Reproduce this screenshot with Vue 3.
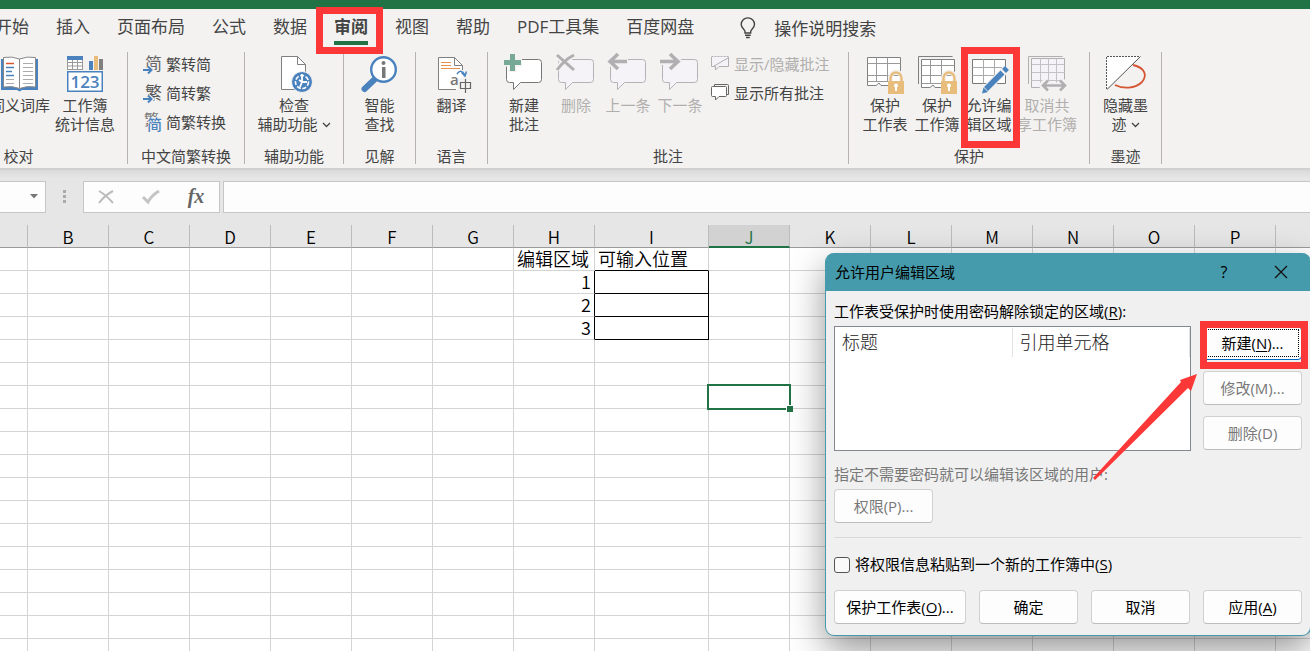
<script setup>
import { ref } from 'vue'

const tabs = ['开始', '插入', '页面布局', '公式', '数据', '审阅', '视图', '帮助', 'PDF工具集', '百度网盘']
const activeTab = ref('审阅')

const columns = ['A', 'B', 'C', 'D', 'E', 'F', 'G', 'H', 'I', 'J', 'K', 'L', 'M', 'N', 'O', 'P', 'Q']
const rowCount = 18
const cells = { H1: '编辑区域', I1: '可输入位置', H2: '1', H3: '2', H4: '3' }
const selected = 'J7'

function cellClass(col, row) {
  const boxed = row >= 2 && row <= 4
  return {
    number: col === 'H' && row > 1,
    'line-right': boxed && (col === 'H' || col === 'I'),
    'line-bottom': col === 'I' && row >= 1 && row <= 4,
  }
}

const pasteInfo = ref(false)
</script>

<template>
  <div class="app">
    <div class="titlebar"></div>

    <nav class="tabs" aria-label="功能区">
      <button
        v-for="tab in tabs"
        :key="tab"
        class="tab"
        :class="{ active: tab === activeTab }"
        @click="activeTab = tab"
      >
        {{ tab }}
        <span v-if="tab === '审阅'" class="mark mark-tab"></span>
      </button>
      <button class="tell-me">
        <svg width="18" height="22" viewBox="0 0 18 22" fill="none" stroke="#444" stroke-width="1.4">
          <path d="M6 16V14.5C6 12.500 2.200 11 2.200 7.500A6.600 6.600 0 0 1 15.500 7.500C15.500 11 11.700 12.500 11.700 14.500V16ZM6 18.300H11.700M7 20.500H10.700" />
        </svg>
        <span>操作说明搜索</span>
      </button>
    </nav>

    <section class="ribbon">
      <div class="group g-proof">
        <div class="items">
          <button class="big w60">
            <svg width="38" height="40" viewBox="0 0 38 40">
              <path d="M0 5H37V36H21L18.500 37.500L16 36H0Z" fill="#4a82bd" />
              <path d="M2.500 3.500Q11 2 18.500 5Q26 2 34.500 3.500V33Q26 31.500 18.500 34.500Q11 31.500 2.500 33Z" fill="#fff" stroke="#888" />
              <path d="M18.500 5V34" stroke="#888" />
              <path d="M5 9.500H13" stroke="#d65532" stroke-width="1.500" />
              <path d="M5 13.500H13M5 17.500H11M5 21.500H13" stroke="#4a82bd" stroke-width="1.300" />
              <path d="M5 25.500H13M5 29.500H13M22 9.500H32M22 13.500H32M22 17.500H32M22 21.500H32M22 25.500H32M22 29.500H32" stroke="#aaa" />
            </svg>
            <span>同义词库</span>
          </button>
          <button class="big w60">
            <svg width="36" height="40" viewBox="0 0 36 40">
              <rect x=".5" y="2.500" width="15" height="13" fill="#fff" stroke="#999" />
              <path d="M.5 8.500H15.500M.5 12H15.500M5.500 6V15.500M10.500 6V15.500" stroke="#999" />
              <rect y="2" width="16" height="4" fill="#4a82bd" />
              <rect x="22" y="7" width="4" height="9" fill="#4a82bd" />
              <rect x="27" y="2" width="4" height="14" fill="#e8bd7b" />
              <rect x="32" y="5" width="4" height="11" fill="#808080" />
              <rect x=".75" y="17.750" width="34.500" height="19.500" fill="#fff" stroke="#4a82bd" stroke-width="1.500" />
              <text x="18" y="34" text-anchor="middle" font-size="17" font-weight="600" fill="#4a82bd">123</text>
            </svg>
            <span>工作簿<br />统计信息</span>
          </button>
        </div>
        <div class="caption">校对</div>
      </div>

      <div class="group g-convert">
        <div class="items list">
          <button class="small">
            <svg width="20" height="20" viewBox="0 0 20 20">
              <text x="2" y="16" font-size="17" fill="#666">简</text>
              <path d="M0 16H9M5 12.500L9 16L5 19.500" fill="none" stroke="#f3f2f1" stroke-width="4" />
              <path d="M0 16H8.500M5 12.500L8.500 16L5 19.500" fill="none" stroke="#4a82bd" stroke-width="2" />
            </svg>
            <span>繁转简</span>
          </button>
          <button class="small">
            <svg width="20" height="20" viewBox="0 0 20 20">
              <text x="2" y="16" font-size="17" fill="#555">繁</text>
              <path d="M0 16H9M5 12.500L9 16L5 19.500" fill="none" stroke="#f3f2f1" stroke-width="4" />
              <path d="M0 16H8.500M5 12.500L8.500 16L5 19.500" fill="none" stroke="#4a82bd" stroke-width="2" />
            </svg>
            <span>简转繁</span>
          </button>
          <button class="small">
            <svg width="20" height="20" viewBox="0 0 20 20">
              <text x="1" y="13" font-size="15" fill="#777">繁</text>
              <rect x="5" y="5" width="14" height="15" fill="#f3f2f1" />
              <text x="4" y="18" font-size="15" font-weight="500" fill="#4a82bd">简</text>
            </svg>
            <span>简繁转换</span>
          </button>
        </div>
        <div class="caption">中文简繁转换</div>
      </div>

      <div class="group g-access">
        <div class="items center">
          <button class="big">
            <svg width="38" height="40" viewBox="-6 0 38 40">
              <path d="M.5 2.500H16.500L24.500 10.500V35.500H.5Z" fill="#fff" stroke="#808080" />
              <path d="M16.500 2.500V10.500H24.500" fill="none" stroke="#808080" />
              <circle cx="21" cy="28" r="10.500" fill="#4a82bd" stroke="#f3f2f1" />
              <circle cx="21" cy="28" r="6.500" fill="none" stroke="#fff" stroke-width="1.600" stroke-dasharray="4 1.600" />
              <path d="M21 20V28L26 28M21 28L18 26M21 28L19 33" fill="none" stroke="#fff" stroke-width="1.800" />
            </svg>
            <span>检查<br />辅助功能<svg class="caret" width="13" height="8" viewBox="0 0 13 8"><path d="M5 2L8.500 5.500L12 2" fill="none" stroke="#444" stroke-width="1.300" /></svg></span>
          </button>
        </div>
        <div class="caption">辅助功能</div>
      </div>

      <div class="group g-insight">
        <div class="items center">
          <button class="big">
            <svg width="37" height="40" viewBox="0 0 37 40">
              <path d="M3.500 35L14 25" stroke="#4a82bd" stroke-width="6" stroke-linecap="round" />
              <circle cx="22.500" cy="15.500" r="12.300" fill="#fff" stroke="#4a82bd" stroke-width="2.400" />
              <circle cx="22.500" cy="9" r="2" fill="#777" />
              <rect x="21" y="13" width="3.500" height="11" fill="#777" />
            </svg>
            <span>智能<br />查找</span>
          </button>
        </div>
        <div class="caption">见解</div>
      </div>

      <div class="group g-language">
        <div class="items center">
          <button class="big">
            <svg width="40" height="40" viewBox="-6 0 40 40">
              <path d="M.5 3.500H16.500L24.500 11.500V35.500H.5Z" fill="#fff" />
              <path d="M18 35.500H.5V3.500H16.500L24.500 11.500V16M16.500 3.500V11.500H24.500" fill="none" stroke="#808080" />
              <path d="M3 8.500H13M3 11.500H13M3 14.500H22" stroke="#e8914a" />
              <path d="M19 20Q23 14 27 21M23.500 18.500L27 22L28.500 17.500" fill="none" stroke="#4a82bd" stroke-width="1.500" />
              <rect x="20" y="24" width="15" height="14" fill="#f3f2f1" />
              <text x="12" y="31" font-size="15" font-weight="600" fill="#777">a</text>
              <path d="M22.500 28.500H32.500V34.500H22.500ZM27.500 25V39" fill="none" stroke="#666" stroke-width="1.200" />
            </svg>
            <span>翻译</span>
          </button>
        </div>
        <div class="caption">语言</div>
      </div>

      <div class="group g-comment">
        <div class="items">
          <button class="big w52">
            <svg width="40" height="40" viewBox="0 0 40 40">
              <path d="M5.500 5.500H34.500Q37.500 5.500 37.500 8.500V25.500Q37.500 28.500 34.500 28.500H16.500L9.500 35.500V28.500H5.500Q2.500 28.500 2.500 25.500V8.500Q2.500 5.500 5.500 5.500Z" fill="#fff" stroke="#777" />
              <path d="M8.500 0V18M0 8.500H18" stroke="#f3f2f1" stroke-width="8" />
              <path d="M8.500 0V17M0 8.500H17" stroke="#78a896" stroke-width="5" />
            </svg>
            <span>新建<br />批注</span>
          </button>
          <button class="big w52" disabled>
            <svg width="40" height="40" viewBox="0 0 40 40">
              <path d="M5.500 5.500H34.500Q37.500 5.500 37.500 8.500V25.500Q37.500 28.500 34.500 28.500H16.500L9.500 35.500V28.500H5.500Q2.500 28.500 2.500 25.500V8.500Q2.500 5.500 5.500 5.500Z" fill="#f5f2f8" stroke="#b5b3b6" />
              <path d="M1 1L18 16M18 1Q8 6 1 16" fill="none" stroke="#f3f2f1" stroke-width="6" />
              <path d="M1 1L18 16M18 1Q8 6 1 16" fill="none" stroke="#b1afb1" stroke-width="3" />
            </svg>
            <span>删除</span>
          </button>
          <button class="big w52" disabled>
            <svg width="40" height="40" viewBox="0 0 40 40">
              <path d="M5.500 5.500H34.500Q37.500 5.500 37.500 8.500V25.500Q37.500 28.500 34.500 28.500H16.500L9.500 35.500V28.500H5.500Q2.500 28.500 2.500 25.500V8.500Q2.500 5.500 5.500 5.500Z" fill="#f5f2f8" stroke="#b5b3b6" />
              <path d="M20 7.500H2M10 0L2 7.500L10 15" fill="none" stroke="#f3f2f1" stroke-width="7" />
              <path d="M19 7.500H2M10 0L2 7.500L10 15" fill="none" stroke="#b1afb1" stroke-width="3.500" />
            </svg>
            <span>上一条</span>
          </button>
          <button class="big w52" disabled>
            <svg width="40" height="40" viewBox="0 0 40 40">
              <path d="M5.500 5.500H34.500Q37.500 5.500 37.500 8.500V25.500Q37.500 28.500 34.500 28.500H16.500L9.500 35.500V28.500H5.500Q2.500 28.500 2.500 25.500V8.500Q2.500 5.500 5.500 5.500Z" fill="#f5f2f8" stroke="#b5b3b6" />
              <path d="M0 7.500H17M10 0L18 7.500L10 15" fill="none" stroke="#f3f2f1" stroke-width="7" />
              <path d="M0 7.500H17M10 0L18 7.500L10 15" fill="none" stroke="#b1afb1" stroke-width="3.500" />
            </svg>
            <span>下一条</span>
          </button>
          <div class="list">
            <button class="small" disabled>
              <svg width="20" height="20" viewBox="0 0 20 20" stroke="#b1afb1">
                <path d="M.5 12.500V2.500H17.500V12.500H8L4.500 16V12.500Z" fill="#f5f2f8" stroke="none" />
                <path d="M.5 2.500H17.500" fill="none" stroke-dasharray="2 1" />
                <path d="M.5 3V12.500H4.500V16L8 12.500H17.500V3M3 12L17 4" fill="none" />
              </svg>
              <span>显示/隐藏批注</span>
            </button>
            <button class="small">
              <svg width="20" height="20" viewBox="0 0 20 20" stroke="#666" fill="#fff">
                <path d="M3.500 3V1.500H16.500Q17.500 1.500 17.500 2.500V11.500H15.500" fill="none" />
                <path d="M1.500 3.500H14.500Q15.500 3.500 15.500 4.500V12.500Q15.500 13.500 14.500 13.500H8L4.500 17V13.500H1.500Q.5 13.500 .5 12.500V4.500Q.5 3.500 1.500 3.500Z" />
              </svg>
              <span>显示所有批注</span>
            </button>
          </div>
        </div>
        <div class="caption">批注</div>
      </div>

      <div class="group g-protect">
        <div class="items">
          <button class="big w52">
            <svg width="40" height="40" viewBox="0 0 40 40">
              <path d="M2.500 3.500H35.500V31.500H16L14 29L11 31.500H2.500Z" fill="#fff" stroke="#808080" />
              <path d="M2.500 9.500H35.500M2.500 21.500H35.500M2.500 27.500H35.500M11.500 3.500V27.500M22.500 3.500V27.500" stroke="#999" />
              <path d="M25.500 28V23.500A5.500 5.500 0 0 1 36.500 23.500V28" fill="none" stroke="#f3f2f1" stroke-width="5" />
              <path d="M25.500 28V24A5.500 5.500 0 0 1 36.500 24V28" fill="none" stroke="#e8bd7b" stroke-width="2.400" />
              <rect x="23" y="27" width="16" height="13" fill="#e8bd7b" />
              <circle cx="31" cy="31.500" r="2" fill="#fff" /><rect x="30" y="32" width="2" height="5" fill="#fff" />
            </svg>
            <span>保护<br />工作表</span>
          </button>
          <button class="big w52">
            <svg width="40" height="40" viewBox="0 0 40 40">
              <path d="M1.500 30V2.500H35.500" fill="none" stroke="#808080" />
              <path d="M4.500 5.500H37.500V33.500H18L16 31L13 33.500H4.500Z" fill="#fff" stroke="#808080" />
              <path d="M4.500 11.500H37.500M4.500 21.500H37.500M4.500 29.500H37.500M13.500 5.500V29.500M24.500 5.500V29.500" stroke="#999" />
              <path d="M26.500 28V23.500A5.500 5.500 0 0 1 37.500 23.500V28" fill="none" stroke="#f3f2f1" stroke-width="5" />
              <path d="M26.500 28V24A5.500 5.500 0 0 1 37.500 24V28" fill="none" stroke="#e8bd7b" stroke-width="2.400" />
              <rect x="24" y="27" width="16" height="13" fill="#e8bd7b" />
              <circle cx="32" cy="31.500" r="2" fill="#fff" /><rect x="31" y="32" width="2" height="5" fill="#fff" />
            </svg>
            <span>保护<br />工作簿</span>
          </button>
          <button class="big w52">
            <svg width="38" height="40" viewBox="-1 0 38 40">
              <path d="M1.500 5.500H34.500V29.500H1.500Z" fill="#fff" stroke="#777" />
              <path d="M1.500 13.500H34.500M1.500 21.500H34.500M12.500 5.500V29.500M23.500 5.500V29.500" stroke="#aaa" />
              <path d="M12 38L36 14" stroke="#f3f2f1" stroke-width="8" />
              <path d="M15 35L31.500 18.500M33 17L36 14" stroke="#4a82bd" stroke-width="5.500" />
              <path d="M11 39.500L12.500 33.500L17 38Z" fill="#4a82bd" />
            </svg>
            <span>允许编<br />辑区域</span>
            <span class="mark mark-range"></span>
          </button>
          <button class="big w64" disabled>
            <svg width="40" height="40" viewBox="0 0 40 40">
              <path d="M1.500 30V2.500H35.500" fill="none" stroke="#b1afb1" />
              <path d="M4.500 4.500H37.500V33.500H4.500Z" fill="#f5f2f8" stroke="#b1afb1" />
              <path d="M4.500 10.500H37.500M4.500 18.500H37.500M4.500 26.500H37.500M13.500 4.500V33M21.500 4.500V33M29.500 4.500V33" stroke="#c4c2c5" />
              <path d="M15 31.500H39M20 26L15 31.500L20 37M34 26L39 31.500L34 37" fill="none" stroke="#f3f2f1" stroke-width="6" />
              <path d="M16 31.500H38M21 26.500L16 31.500L21 36.500M33 26.500L38 31.500L33 36.500" fill="none" stroke="#b1afb1" stroke-width="2.600" />
            </svg>
            <span>取消共<br />享工作簿</span>
          </button>
        </div>
        <div class="caption">保护</div>
      </div>

      <div class="group g-ink">
        <div class="items center">
          <button class="big">
            <svg width="40" height="40" viewBox="0 0 40 40">
              <path d="M1.500 2.500H35.500L1.500 35.500Z" fill="#fff" />
              <path d="M1.500 35V2.500H35" fill="none" stroke="#555" stroke-dasharray="2 1" />
              <path d="M35.500 2.500L2 35.500" stroke="#555" />
              <path d="M28 11C41 14 42 22 37 28C30 35 18 35 10 31" fill="none" stroke="#d65532" stroke-width="1.800" />
            </svg>
            <span>隐藏墨<br />迹<svg class="caret" width="13" height="8" viewBox="0 0 13 8"><path d="M5 2L8.500 5.500L12 2" fill="none" stroke="#444" stroke-width="1.300" /></svg></span>
          </button>
        </div>
        <div class="caption">墨迹</div>
      </div>
    </section>

    <div class="formula-bar">
      <button class="name-box" aria-label="名称框">
        <svg width="8" height="5" viewBox="0 0 8 5"><path d="M0 0H8L4 4.500Z" fill="#777" /></svg>
      </button>
      <svg class="grip" width="3" height="14" viewBox="0 0 3 14" fill="#aaa"><path d="M0 0H3V3H0ZM0 5H3V8H0ZM0 10H3V13H0Z" /></svg>
      <div class="formula-actions">
        <button aria-label="取消输入">
          <svg width="16" height="14" viewBox="0 0 16 14"><path d="M1 1Q8 5 15 13M15 1Q7 5 1 13" fill="none" stroke="#bbb" stroke-width="2" /></svg>
        </button>
        <button aria-label="输入">
          <svg width="18" height="14" viewBox="0 0 18 14"><path d="M1 7L6 12Q10 5 17 1" fill="none" stroke="#c4c4c4" stroke-width="3" /></svg>
        </button>
        <button class="fx">fx</button>
      </div>
      <input class="formula-input" type="text" aria-label="编辑栏" />
    </div>

    <table class="sheet">
      <thead>
        <tr>
          <th v-for="col in columns" :key="col" scope="col" :class="['c-' + col, { current: col === 'J' }]">
            {{ col === 'A' ? '' : col }}
          </th>
        </tr>
      </thead>
      <tbody>
        <tr v-for="row in rowCount" :key="row">
          <td v-for="col in columns" :key="col" :class="cellClass(col, row)">
            {{ cells[col + row] }}
            <span v-if="col + row === selected" class="selection"></span>
          </td>
        </tr>
      </tbody>
    </table>

    <section class="dialog" role="dialog" aria-labelledby="dialog-title">
      <header class="dialog-head">
        <h1 id="dialog-title">允许用户编辑区域</h1>
        <button class="help" aria-label="帮助">?</button>
        <button class="close" aria-label="关闭">
          <svg width="14" height="14" viewBox="0 0 14 14"><path d="M1 1L13 13M13 1L1 13" stroke="#111" stroke-width="1.300" /></svg>
        </button>
      </header>
      <div class="dialog-body">
        <p id="ranges-label" class="line">工作表受保护时使用密码解除锁定的区域(<u>R</u>):</p>
        <div class="ranges">
          <div class="range-list">
            <table aria-labelledby="ranges-label">
              <thead>
                <tr><th scope="col">标题</th><th scope="col">引用单元格</th></tr>
              </thead>
            </table>
          </div>
          <div class="range-actions">
            <button class="btn focused">新建(<u>N</u>)...<span class="mark mark-new"></span></button>
            <button class="btn" disabled>修改(M)...</button>
            <button class="btn" disabled>删除(D)</button>
          </div>
        </div>
        <p class="line muted">指定不需要密码就可以编辑该区域的用户:</p>
        <button class="btn permission" disabled>权限(P)...</button>
        <hr />
        <label class="check">
          <input v-model="pasteInfo" type="checkbox" />
          <span>将权限信息粘贴到一个新的工作簿中(<u>S</u>)</span>
        </label>
        <footer class="dialog-foot">
          <button class="btn wide">保护工作表(<u>O</u>)...</button>
          <button class="btn">确定</button>
          <button class="btn">取消</button>
          <button class="btn">应用(<u>A</u>)</button>
        </footer>
      </div>
      <svg class="arrow" width="106" height="108" viewBox="0 0 106 108">
        <path d="M104 1L98 18L95 15L2 107L0 105L88 9L87 7Z" fill="#fb3737" />
      </svg>
    </section>
  </div>
</template>

<style>
body {
  margin: 0;
  overflow: hidden;
}
</style>

<style scoped>
.app {
  position: relative;
  height: 100vh;
  overflow: hidden;
  background: #e6e6e6;
  color: #444;
  font-family: "Open Sans", "Noto Sans CJK SC", sans-serif;
  font-size: 15px;
  line-height: 19px;
}

.app * {
  box-sizing: border-box;
}

button {
  margin: 0;
  padding: 0;
  border: 0;
  background: none;
  color: inherit;
  font: inherit;
}

svg {
  display: block;
  flex: none;
  overflow: visible;
}

.titlebar {
  height: 9px;
  background: #217346;
}

.mark {
  position: absolute;
  border: 7px solid #fb3737;
  pointer-events: none;
}

.tabs {
  display: flex;
  gap: 27px;
  height: 43px;
  padding-top: 5px;
  margin-left: -5px;
  font-size: 17px;
}

.tabs,
.ribbon {
  background: #f3f2f1;
}

.tab {
  position: relative;
  height: 26px;
  line-height: 26px;
  white-space: nowrap;
}

.tab.active {
  height: 31px;
  padding-bottom: 1px;
  border-bottom: 4px solid #217346;
  font-weight: 700;
}

.mark-tab {
  top: -7px;
  left: -18px;
  width: 67px;
  height: 47px;
  z-index: 2;
}

.tell-me {
  display: flex;
  align-items: center;
  gap: 17px;
  height: 28px;
  margin-left: 18px;
}

.ribbon {
  display: flex;
  height: 118px;
  margin-left: -90px;
  border-bottom: 2px solid #d2d0ce;
}

.group {
  display: flex;
  flex-direction: column;
  flex: none;
  height: 112px;
  border-right: 1px solid #b5b2b0;
}

.g-proof { width: 218px; }
.g-convert { width: 117px; }
.g-access { width: 99px; }
.g-insight { width: 72px; }
.g-language { width: 72px; }
.g-comment { width: 361px; }
.g-protect { width: 241px; }
.g-ink { width: 72px; }

.items {
  display: flex;
  flex: 1;
  align-items: flex-start;
  padding-top: 2px;
}

.g-proof .items {
  justify-content: flex-end;
  gap: 5px;
  padding-right: 12px;
}

.g-comment .items,
.g-protect .items {
  padding-left: 10px;
}

.center {
  justify-content: center;
}

.caption {
  height: 16px;
  line-height: 16px;
  text-align: center;
}

.g-proof .caption {
  padding-right: 0;
}

.big {
  position: relative;
  display: flex;
  flex-direction: column;
  align-items: center;
  gap: 2px;
  white-space: nowrap;
}

.w52 { width: 52px; }
.w60 { width: 60px; }
.w64 { width: 64px; }

.big:disabled,
.small:disabled {
  color: #b1afad;
}

.caret {
  display: inline-block;
  vertical-align: 1px;
}

.list {
  display: flex;
  flex-direction: column;
  gap: 9px;
}

.items.list {
  padding: 2px 0 0 15px;
}

.items > .list {
  padding-left: 5px;
}

.small {
  display: flex;
  align-items: center;
  gap: 3px;
  height: 20px;
  white-space: nowrap;
}

.mark-range {
  top: -7px;
  left: -2px;
  width: 59px;
  height: 101px;
  z-index: 2;
}

.formula-bar {
  display: flex;
  align-items: center;
  height: 55px;
  padding-bottom: 2px;
  background: linear-gradient(#d9d9d9, #e6e6e6 8px);
}

.name-box,
.formula-actions,
.formula-input {
  height: 32px;
  border: 1px solid #c6c6c6;
  background: #fdfdfd;
}

.name-box {
  display: flex;
  align-items: center;
  justify-content: flex-end;
  width: 46px;
  padding-right: 7px;
  border-left: 0;
}

.grip {
  margin: 0 17px;
}

.formula-actions {
  display: flex;
  align-items: center;
  justify-content: space-between;
  width: 137px;
  margin-right: 3px;
  padding: 0 14px;
}

.fx {
  width: 18px;
  color: #666;
  font: italic bold 20px "Liberation Serif", serif;
}

.formula-input {
  flex: 1;
  min-width: 0;
  border-right: 0;
}

.sheet {
  width: calc(100% + 47px);
  table-layout: fixed;
  border-collapse: separate;
  border-spacing: 0;
  background: #fff;
  color: #000;
  font-size: 18px;
  font-family: "Noto Sans CJK SC", sans-serif;
  font-weight: 350;
}

.sheet th {
  width: 81px;
  height: 23px;
  padding: 2px 0 0;
  border-right: 1px solid #bcbcbc;
  border-bottom: 1px solid #9b9b9b;
  background: #e6e6e6;
  font-size: 17px;
  font-weight: 350;
  line-height: 20px;
}

.sheet th.c-A { width: 28px; }
.sheet th.c-I { width: 114px; }
.sheet th.c-Q { width: auto; }

.sheet th.current {
  border-bottom: 2px solid #217346;
  background: #d2d2d2;
  color: #217346;
  line-height: 19px;
}

.sheet td {
  position: relative;
  height: 23px;
  padding: 0 3px 1px 3px;
  border-right: 1px solid #d4d4d4;
  border-bottom: 1px solid #d4d4d4;
  line-height: 21px;
  white-space: nowrap;
}

.sheet td.number {
  text-align: right;
}

.sheet td.line-right {
  border-right-color: #000;
}

.sheet td.line-bottom {
  border-bottom-color: #000;
}

.selection {
  position: absolute;
  inset: -2px;
  border: 2px solid #217346;
  z-index: 1;
}

.selection::after {
  content: "";
  position: absolute;
  right: -4px;
  bottom: -4px;
  width: 6px;
  height: 6px;
  border: 1px solid #fff;
  border-width: 1px 0 0 1px;
  background: #217346;
}

.dialog {
  position: absolute;
  top: 253px;
  right: -1px;
  width: 486px;
  border: 1px solid #459bac;
  border-top: 0;
  border-radius: 9px;
  background: #f0f0f0;
  box-shadow: 0 14px 36px rgba(0, 0, 0, 0.42);
  color: #000;
  z-index: 3;
}

.dialog-head {
  display: flex;
  align-items: center;
  height: 38px;
  padding: 0 22px 0 9px;
  border-radius: 8px 8px 0 0;
  background: #459bac;
}

.dialog-head h1 {
  flex: 1;
  margin: 0;
  font-size: 15px;
  font-weight: 400;
}

.help {
  width: 14px;
  margin-right: 43px;
  font-size: 16px;
}

.dialog-body {
  padding: 11px 8px 11px 8px;
}

.line {
  margin: 0;
  height: 24px;
  line-height: 19px;
}

.muted {
  color: #787878;
}

.ranges {
  display: flex;
  gap: 12px;
  margin-bottom: 14px;
}

.range-list {
  flex: 1;
  height: 125px;
  padding-top: 1px;
  border: 1px solid #828790;
  background: #fff;
}

.range-list table {
  width: 100%;
  border-spacing: 0;
  table-layout: fixed;
}

.range-list th {
  height: 29px;
  padding: 0 7px;
  border-right: 1px solid #e2e2e2;
  color: #222;
  font-size: 18px;
  font-weight: 300;
  text-align: left;
}

.range-actions {
  display: flex;
  flex-direction: column;
  gap: 11px;
}

.btn {
  position: relative;
  width: 99px;
  height: 34px;
  border: 1px solid #d0d0d0;
  border-bottom-color: #bcbcbc;
  border-radius: 4px;
  background: #fdfdfd;
  white-space: nowrap;
}

.btn:disabled {
  color: #787878;
}

.btn.focused {
  border-color: #0067c0;
  outline: 1px dotted #000;
  outline-offset: -4px;
}

.mark-new {
  top: -6px;
  left: -4px;
  width: 108px;
  height: 48px;
}

.permission {
  display: block;
}

hr {
  margin: 14px 0 17px;
  border: 0;
  border-top: 1px solid #d9d9d9;
}

.check {
  display: flex;
  align-items: center;
  gap: 5px;
}

.check input {
  appearance: none;
  width: 16px;
  height: 16px;
  margin: 0;
  border: 1px solid #555;
  border-radius: 3px;
  background: #fafafa;
}

.check input:checked {
  background: #459bac;
}

.dialog-foot {
  display: flex;
  justify-content: space-between;
  margin-top: 16px;
}

.wide {
  width: 132px;
}

.arrow {
  position: absolute;
  top: 120px;
  left: 267px;
  pointer-events: none;
}

u {
  text-underline-offset: 2px;
}
</style>
